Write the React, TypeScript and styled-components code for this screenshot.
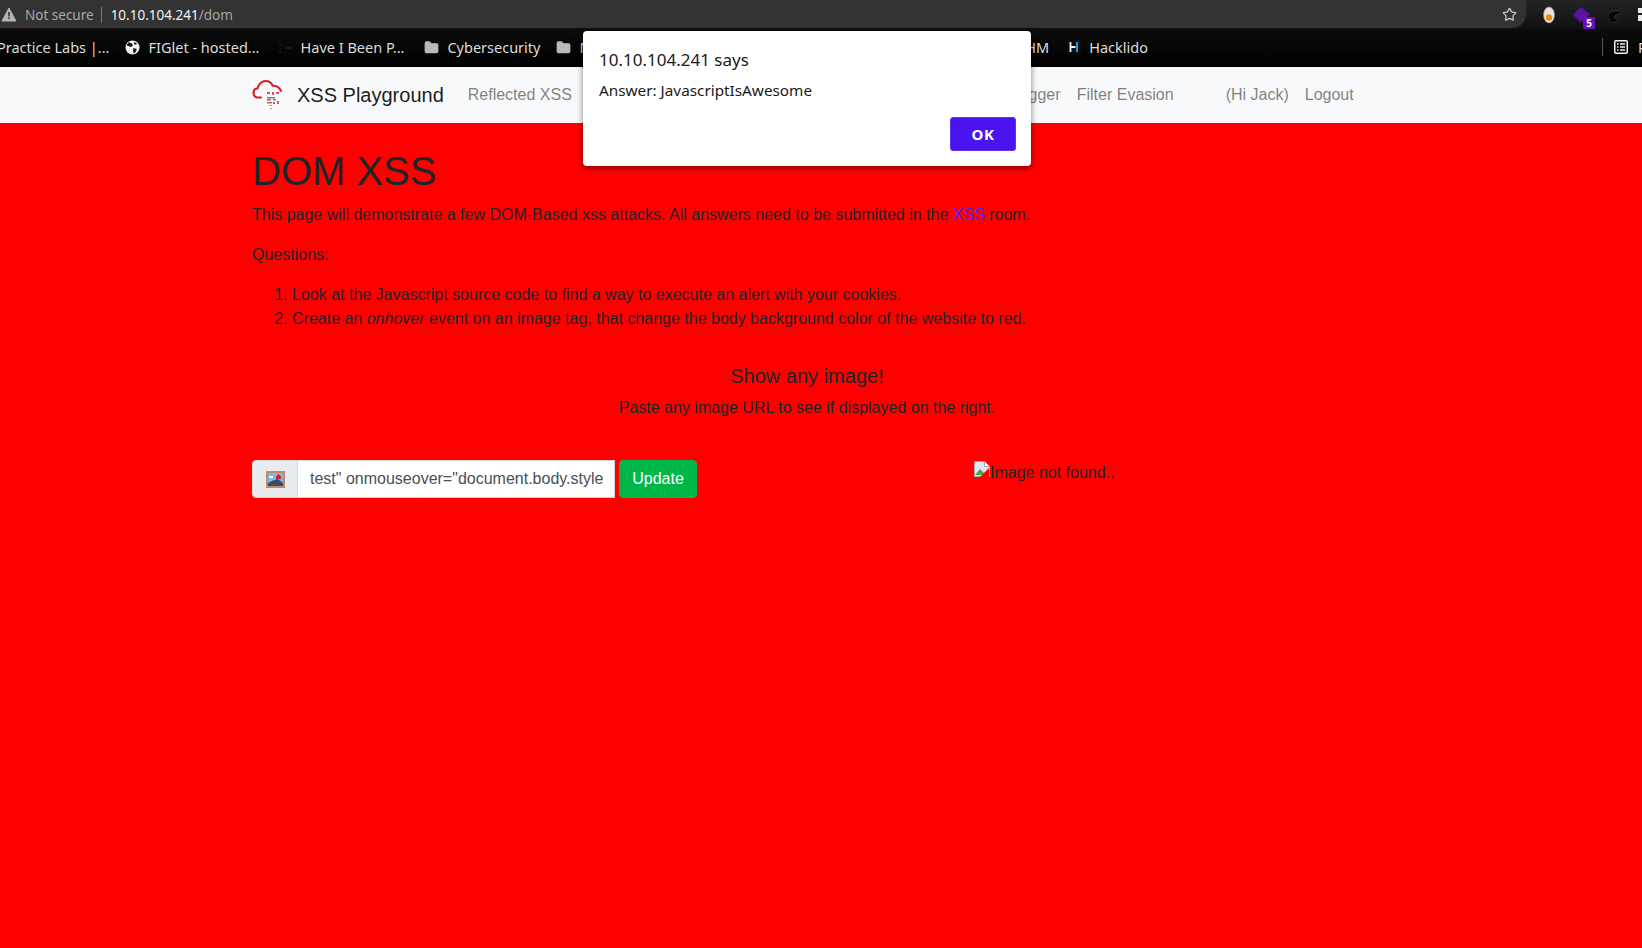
import React from 'react';
import styled, { createGlobalStyle } from 'styled-components';
import { Star, Folder } from 'lucide-react';

const NAV_LINKS = ['Reflected XSS', 'Stored XSS', 'DOM-Based XSS', 'IP and Port Scanner', 'Keylogger', 'Filter Evasion'];

export default function App() {
  return (
    <>
      <GlobalStyle />
      <Screen>
        <TopBar>
          <Omnibox>
            <WarningIcon />
            <NotSecure>Not secure</NotSecure>
            <UrlDivider />
            <Url>
              <b>10.10.104.241</b>/dom
            </Url>
            <StarSlot>
              <Star size={15} color="#c8c8c8" strokeWidth={2} />
            </StarSlot>
          </Omnibox>
          <Extensions>
            <EggIcon />
            <ExtensionSlot $left={16} $top>
              <GemIcon />
            </ExtensionSlot>
            <ExtensionSlot $left={9}>
              <FootIcon />
            </ExtensionSlot>
            <ExtensionSlot $left={17}>
              <PuzzleIcon />
            </ExtensionSlot>
          </Extensions>
        </TopBar>

        <BookmarksBar>
          <Bookmark $cut>Practice Labs |...</Bookmark>
          <Bookmark $gap={16}>
            <GlobeIcon />
            FIGlet - hosted...
          </Bookmark>
          <Bookmark $gap={18}>
            <DashIcon />
            Have I Been P...
          </Bookmark>
          <Bookmark $gap={20}>
            <Folder size={15} color="#b9b9b9" fill="#b9b9b9" />
            Cybersecurity
          </Bookmark>
          <Bookmark $gap={16}>
            <Folder size={15} color="#b9b9b9" fill="#b9b9b9" />
            Machines
          </Bookmark>
          <BookmarkSpacer />
          <Bookmark>THM</Bookmark>
          <Bookmark $gap={18}>
            <HacklidoIcon />
            Hacklido
          </Bookmark>
          <BookmarkDivider />
          <ReadingList>
            <ListIcon />
            Reading list
          </ReadingList>
        </BookmarksBar>

        <Navbar>
          <NavInner>
            <Brand>
              <LogoIcon />
              XSS Playground
            </Brand>
            <NavLinks>
              {NAV_LINKS.map((link) => (
                <NavLink key={link}>{link}</NavLink>
              ))}
            </NavLinks>
            <NavUser>
              <NavLink>(Hi Jack)</NavLink>
              <NavLink>Logout</NavLink>
            </NavUser>
          </NavInner>
        </Navbar>

        <Main>
          <Title>DOM XSS</Title>
          <Paragraph>
            This page will demonstrate a few DOM-Based xss attacks. All answers need to be submitted in the{' '}
            <InlineLink>XSS</InlineLink> room.
          </Paragraph>
          <Paragraph>Questions:</Paragraph>
          <QuestionList>
            <li>Look at the Javascript source code to find a way to execute an alert with your cookies.</li>
            <li>
              Create an <em>onhover</em> event on an image tag, that change the body background color of the website to
              red.
            </li>
          </QuestionList>
          <ShowTitle>Show any image!</ShowTitle>
          <ShowText>Paste any image URL to see if displayed on the right.</ShowText>
          <FormRow>
            <InputGroup>
              <InputAddon>
                <PictureIcon />
              </InputAddon>
              <UrlField>test&quot; onmouseover=&quot;document.body.style</UrlField>
            </InputGroup>
            <UpdateButton type="button">Update</UpdateButton>
            <BrokenImage>
              <BrokenImageIcon />
              Image not found..
            </BrokenImage>
          </FormRow>
        </Main>

        <AlertDialog>
          <AlertTitle>10.10.104.241 says</AlertTitle>
          <AlertMessage>Answer: JavascriptIsAwesome</AlertMessage>
          <AlertActions>
            <OkButton type="button">OK</OkButton>
          </AlertActions>
        </AlertDialog>
      </Screen>
    </>
  );
}

function WarningIcon() {
  return (
    <svg width="16" height="15" viewBox="0 0 16 15">
      <path d="M8 1l7 13H1z" fill="#b4b4b4" stroke="#b4b4b4" strokeLinejoin="round" />
      <path d="M7.200 5h1.600v4.500H7.200zM7.200 10.500h1.600V12H7.200z" fill="#333333" />
    </svg>
  );
}

function EggIcon() {
  return (
    <svg width="14" height="18" viewBox="0 0 14 18">
      <ellipse cx="7" cy="9" rx="5.500" ry="8" fill="#e8e2d8" stroke="#8a8a8a" strokeWidth="0.6" />
      <circle cx="7" cy="11.500" r="3.200" fill="#f08a12" />
    </svg>
  );
}

function GemIcon() {
  return (
    <svg width="26" height="30" viewBox="0 0 26 30">
      <path d="M9 7l9 7.500-9 7.500-8-7.500z" fill="#5b13a8" />
      <path d="M1 14.500l8 7.500v2l-8-7.500z" fill="#3c0c75" />
      <rect x="11" y="17" width="12" height="12" rx="1.500" fill="#6a0fb8" />
      <text x="17" y="27" fontSize="10" fontWeight="700" textAnchor="middle" fill="#fff" fontFamily="Noto Sans, sans-serif">
        5
      </text>
    </svg>
  );
}

function FootIcon() {
  return (
    <svg width="14" height="17" viewBox="0 0 14 17">
      <path
        d="M9.500 5c3 0 4 1.500 3.500 3-2 .5-4.500 0-5.500 2-.8 2 1 3 3 3 .8 1.500-.5 3.500-3.500 3.500-4 0-6-3-6-6.500 0-3.200 4.500-5 8.500-5z"
        fill="#050505"
        stroke="#4a4a4a"
        strokeWidth="0.5"
      />
      <circle cx="3" cy="3" r="1.500" fill="#050505" stroke="#4a4a4a" strokeWidth="0.4" />
      <circle cx="6.500" cy="2" r="1.400" fill="#050505" stroke="#4a4a4a" strokeWidth="0.4" />
      <circle cx="10" cy="2.500" r="1.200" fill="#050505" stroke="#4a4a4a" strokeWidth="0.4" />
    </svg>
  );
}

function PuzzleIcon() {
  return (
    <svg width="16" height="16" viewBox="0 0 16 16">
      <rect x="0" y="1" width="6" height="5" fill="#eee" />
      <rect x="0" y="8" width="6" height="6" fill="#eee" />
    </svg>
  );
}

function GlobeIcon() {
  return (
    <svg width="15" height="15" viewBox="0 0 16 16">
      <circle cx="8" cy="8" r="7.500" fill="#f1f1f1" />
      <path d="M4 2.500l3 1 1.500 2-2 2-3-1-2-1zM9 8.500l3.500 1-1 3-2 2-1-3zM10 2l3 2-2 1-1.500-1z" fill="#111" />
    </svg>
  );
}

function DashIcon() {
  return (
    <svg width="15" height="15" viewBox="0 0 15 15">
      <path d="M1 3h1M3 5h1M2 9h1M1 12h2M7 8h7" stroke="#2a2a2a" strokeWidth="1.200" />
    </svg>
  );
}

function HacklidoIcon() {
  return (
    <svg width="14" height="14" viewBox="0 0 14 14">
      <rect width="14" height="14" fill="#0b0f14" />
      <path d="M3.500 2v10M3.500 7h5" stroke="#f2f2f2" strokeWidth="1.800" />
      <path d="M10 2v10" stroke="#2aa4ee" strokeWidth="1.800" />
    </svg>
  );
}

function ListIcon() {
  return (
    <svg width="14" height="14" viewBox="0 0 14 14">
      <rect x="0.750" y="0.750" width="12.500" height="12.500" rx="1" fill="none" stroke="#f0f0f0" strokeWidth="1.500" />
      <path d="M3 4h1.500M6 4h5M3 7h1.500M6 7h5M3 10h1.500M6 10h5" stroke="#f0f0f0" strokeWidth="1.300" />
    </svg>
  );
}

function LogoIcon() {
  return (
    <svg width="32" height="32" viewBox="0 0 32 32">
      <path
        d="M9 18.500H6C3.200 18.500 1.500 16.500 1.500 14c0-2.500 1.800-4.400 4.200-4.700C6.600 5 10 2 13.500 2c3.200 0 6 2 7.200 4.800 3.300-.5 7 1.500 8.300 5"
        fill="none"
        stroke="#d3202a"
        strokeWidth="2.100"
        strokeLinecap="round"
      />
      <path d="M15 13h3v2h-3zM20 13h2v3h-2zM24 13h3v2h-3z" fill="#d9545b" />
      <path d="M15 18h8v1.500h-8zM15 20h4v1.500h-4zM21 20h3v1.500h-3z" fill="#7d7d7d" />
      <path d="M15 23h5v1.500h-5zM21 23h2v2h-2zM25 22h2v3h-2z" fill="#d9545b" />
      <path d="M17 26h3v1h-3zM18 29h2v1h-2z" fill="#cf8f92" />
    </svg>
  );
}

function PictureIcon() {
  return (
    <svg width="19" height="17" viewBox="0 0 19 17">
      <rect width="19" height="17" fill="#c48a60" />
      <rect x="2" y="2" width="15" height="13" fill="#7fb8ea" />
      <path d="M2 15v-3l6-3 4-1 5 4v3z" fill="#3d4c66" />
      <path d="M3 5h4v2H3z" fill="#f2f6fb" />
      <path d="M12.500 3l2.500 2.500v2.500h-5V5.500z" fill="#d2202c" />
    </svg>
  );
}

function BrokenImageIcon() {
  return (
    <svg width="16" height="16" viewBox="0 0 16 16">
      <path d="M.5.500h10l5 5v10H.5z" fill="#dfe6f4" stroke="#a4a9b5" />
      <path d="M10.500.500v5h5" fill="#fff" stroke="#a4a9b5" />
      <path d="M1 14l5-6 4 4 2 2z" fill="#4aa54a" />
      <path d="M15 7L6 16h9z" fill="#ff0000" />
    </svg>
  );
}

const GlobalStyle = createGlobalStyle`
  html, body {
    margin: 0;
    padding: 0;
    width: 1642px;
    height: 948px;
    overflow: hidden;
    background: #ff0000;
  }
  * {
    box-sizing: border-box;
  }
`;

const Screen = styled.div`
  position: relative;
  width: 1642px;
  height: 948px;
  overflow: hidden;
  background: #ff0000;
  color: #212529;
  font-family: 'Liberation Sans', Arial, sans-serif;
  font-size: 16px;
  line-height: 24px;
`;

const TopBar = styled.div`
  display: flex;
  align-items: flex-start;
  height: 29px;
  background: linear-gradient(#242424, #101010);
`;

const Omnibox = styled.div`
  display: flex;
  align-items: center;
  width: 1526px;
  height: 28px;
  padding: 1px 0 0 1px;
  background: #333333;
  border-radius: 0 0 14px 0;
  font-family: 'Noto Sans', sans-serif;
  font-size: 13.500px;
`;

const NotSecure = styled.span`
  margin-left: 8px;
  color: #a9a9a9;
`;

const UrlDivider = styled.span`
  width: 1px;
  height: 16px;
  margin: 0 9px 0 7px;
  background: #7a7a7a;
`;

const Url = styled.span`
  color: #a5a5a5;

  b {
    font-weight: 400;
    color: #f2f2f2;
  }
`;

const StarSlot = styled.span`
  display: flex;
  margin-left: auto;
  margin-right: 9px;
`;

const Extensions = styled.div`
  display: flex;
  align-items: center;
  flex: 1;
  height: 29px;
  padding-left: 16px;
  overflow: hidden;

  svg {
    display: block;
    flex: none;
  }
`;

const ExtensionSlot = styled.span<{ $left: number; $top?: boolean }>`
  flex: none;
  margin-left: ${(p) => p.$left}px;
  align-self: ${(p) => (p.$top ? 'flex-start' : 'center')};
`;

const BookmarksBar = styled.div`
  display: flex;
  align-items: center;
  height: 38px;
  padding-bottom: 2px;
  background: linear-gradient(#0c0c0c, #000000);
  font-family: 'Noto Sans', sans-serif;
  font-size: 14.500px;
  white-space: nowrap;
  color: #dcdcdc;
`;

const Bookmark = styled.span<{ $gap?: number; $cut?: boolean }>`
  display: flex;
  align-items: center;
  gap: 8px;
  margin-left: ${(p) => (p.$cut ? '-3px' : `${p.$gap ?? 0}px`)};
`;

const BookmarkSpacer = styled.span`
  flex: 1;
`;

const BookmarkDivider = styled.span`
  width: 1px;
  height: 18px;
  margin: 0 11px 0 454px;
  background: #555555;
`;

const ReadingList = styled.span`
  display: flex;
  flex: none;
  align-items: center;
  gap: 10px;
  width: 28px;
  overflow: hidden;

  svg {
    flex: none;
  }
`;

const Navbar = styled.nav`
  height: 56px;
  background: #f8f9fa;
`;

const NavInner = styled.div`
  display: flex;
  align-items: center;
  height: 100%;
  width: 1110px;
  margin-left: 252px;
  white-space: nowrap;
`;

const Brand = styled.span`
  display: flex;
  align-items: center;
  gap: 13px;
  margin-right: 16px;
  font-size: 20px;
  color: rgba(0, 0, 0, 0.9);
`;

const NavLinks = styled.div`
  display: flex;
  gap: 0.2px;
`;

const NavUser = styled.div`
  display: flex;
  margin-left: 36px;
`;

const NavLink = styled.span`
  padding: 0 8px;
  color: rgba(0, 0, 0, 0.5);
`;

const Main = styled.main`
  width: 1110px;
  margin-left: 252px;
  padding-top: 24px;
`;

const Title = styled.h1`
  margin: 0 0 8px;
  font-size: 40px;
  font-weight: 500;
  line-height: 48px;
`;

const Paragraph = styled.p`
  margin: 0 0 16px;
`;

const InlineLink = styled.a`
  color: #5024f5;
`;

const QuestionList = styled.ol`
  margin: 0 0 16px;
  padding-left: 40px;
`;

const ShowTitle = styled.h5`
  margin: 33px 0 8px;
  font-size: 20px;
  font-weight: 500;
  line-height: 24px;
  text-align: center;
`;

const ShowText = styled.p`
  margin: 0 0 40px;
  text-align: center;
`;

const FormRow = styled.div`
  display: flex;
  align-items: flex-start;
`;

const InputGroup = styled.div`
  display: flex;
  width: 363px;
  height: 38px;
`;

const InputAddon = styled.span`
  display: flex;
  align-items: center;
  justify-content: center;
  width: 46px;
  background: #e9ecef;
  border: 1px solid #ced4da;
  border-radius: 4px 0 0 4px;
`;

const UrlField = styled.div`
  flex: 1;
  margin-left: -1px;
  padding: 6px 12px;
  background: #ffffff;
  border: 1px solid #ced4da;
  color: #495057;
  white-space: nowrap;
  overflow: hidden;
`;

const UpdateButton = styled.button`
  width: 78px;
  height: 38px;
  margin-left: 4px;
  padding: 0;
  background: #00b74a;
  border: 1px solid #00b74a;
  border-radius: 4px;
  color: #ffffff;
  font: inherit;
`;

const BrokenImage = styled.span`
  display: flex;
  align-items: flex-start;
  margin-left: 277px;
  padding-top: 1px;

  svg {
    flex: none;
  }
`;

const AlertDialog = styled.div`
  position: absolute;
  left: 583px;
  top: 31px;
  width: 448px;
  height: 135px;
  padding: 16px 15px 16px 16px;
  background: #ffffff;
  border-radius: 4px;
  box-shadow: 0 2px 6px rgba(0, 0, 0, 0.5);
  font-family: 'Noto Sans', sans-serif;
  color: #1a1a1a;
`;

const AlertTitle = styled.div`
  font-size: 17px;
  line-height: 26px;
`;

const AlertMessage = styled.div`
  margin-top: 7px;
  font-size: 15.300px;
  line-height: 20px;
`;

const AlertActions = styled.div`
  display: flex;
  justify-content: flex-end;
  margin-top: 17px;
`;

const OkButton = styled.button`
  width: 66px;
  height: 34px;
  padding: 0;
  background: #4a14ef;
  border: 1px solid #5a35f5;
  border-radius: 3px;
  color: #ffffff;
  font: 700 15px 'Noto Sans', sans-serif;
  letter-spacing: 0.5px;
`;
